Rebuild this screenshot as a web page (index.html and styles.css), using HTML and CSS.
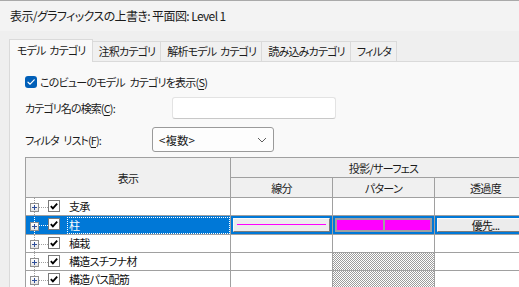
FILE: index.html
```html
<!DOCTYPE html>
<html lang="ja">
<head>
<meta charset="utf-8">
<title>表示/グラフィックスの上書き</title>
<link rel="stylesheet" href="styles.css">
</head>
<body>
<div class="titlebar">表示/グラフィックスの上書き: 平面図: Level 1</div>
<div class="dialog">
  <div class="tabs">
    <div class="tab active">モデル カテゴリ</div>
    <div class="tab">注釈カテゴリ</div>
    <div class="tab">解析モデル カテゴリ</div>
    <div class="tab">読み込みカテゴリ</div>
    <div class="tab">フィルタ</div>
  </div>
  <div class="panel">
    <div class="showcat">
      <span class="wincb"><svg width="12" height="12" viewBox="0 0 12 12"><path d="M3 6.2 L5.1 8.2 L9.2 3.8" fill="none" stroke="#fff" stroke-width="1.2" stroke-linecap="round" stroke-linejoin="round"/></svg></span>
      <span>このビューのモデル カテゴリを表示(<u>S</u>)</span>
    </div>
    <div class="field">
      <span class="flabel search-label">カテゴリ名の検索(<u>C</u>):</span>
      <div class="input"></div>
    </div>
    <div class="field field-filter">
      <span class="flabel filter-label">フィルタ リスト(<u>F</u>):</span>
      <div class="select"><span>&lt;複数&gt;</span><svg width="10" height="6" viewBox="0 0 10 6"><path d="M1 1 L5 5 L9 1" fill="none" stroke="#5f5f5f" stroke-width="1"/></svg></div>
    </div>
    <svg class="defs" width="0" height="0" aria-hidden="true"><defs><pattern id="checker" width="2" height="2" patternUnits="userSpaceOnUse"><rect width="2" height="2" fill="#fff"/><rect width="1" height="1" fill="#9c9c9c"/><rect x="1" y="1" width="1" height="1" fill="#9c9c9c"/></pattern></defs></svg>
    <table class="grid">
      <colgroup><col class="c-name"><col class="c-w"><col class="c-w"><col class="c-w"></colgroup>
      <thead>
        <tr><th rowspan="2" class="h-name">表示</th><th colspan="3" class="h-group">投影/サーフェス</th></tr>
        <tr><th class="h-sub">線分</th><th class="h-sub">パターン</th><th class="h-sub">透過度</th></tr>
      </thead>
      <tbody>
        <tr>
          <td class="name"><div class="namecell"><span class="plus"><svg width="9" height="9" viewBox="0 0 9 9"><path d="M2 4.5 H7 M4.5 2 V7" stroke="#2f4f9a" stroke-width="1"/></svg></span><span class="conn"></span><span class="gcb"><svg width="11" height="11" viewBox="0 0 11 11"><path d="M2 5 L4.3 7.6 L9 2.4" fill="none" stroke="#000" stroke-width="2"/></svg></span><span class="lbl">支承</span></div></td>
          <td></td><td></td><td></td>
        </tr>
        <tr class="sel">
          <td class="name"><div class="namecell"><span class="plus"><svg width="9" height="9" viewBox="0 0 9 9"><path d="M2 4.5 H7 M4.5 2 V7" stroke="#2f4f9a" stroke-width="1"/></svg></span><span class="conn"></span><span class="gcb"><svg width="11" height="11" viewBox="0 0 11 11"><path d="M2 5 L4.3 7.6 L9 2.4" fill="none" stroke="#000" stroke-width="2"/></svg></span><span class="lbl">柱</span></div></td>
          <td class="selcell"><div class="btn linebtn"><span class="mline"></span></div></td>
          <td class="selcell"><div class="patbtn"><span></span><span></span></div></td>
          <td class="selcell"><div class="btn">優先...</div></td>
        </tr>
        <tr>
          <td class="name"><div class="namecell"><span class="plus"><svg width="9" height="9" viewBox="0 0 9 9"><path d="M2 4.5 H7 M4.5 2 V7" stroke="#2f4f9a" stroke-width="1"/></svg></span><span class="conn"></span><span class="gcb"><svg width="11" height="11" viewBox="0 0 11 11"><path d="M2 5 L4.3 7.6 L9 2.4" fill="none" stroke="#000" stroke-width="2"/></svg></span><span class="lbl">植栽</span></div></td>
          <td></td><td></td><td></td>
        </tr>
        <tr>
          <td class="name"><div class="namecell"><span class="plus"><svg width="9" height="9" viewBox="0 0 9 9"><path d="M2 4.5 H7 M4.5 2 V7" stroke="#2f4f9a" stroke-width="1"/></svg></span><span class="conn"></span><span class="gcb"><svg width="11" height="11" viewBox="0 0 11 11"><path d="M2 5 L4.3 7.6 L9 2.4" fill="none" stroke="#000" stroke-width="2"/></svg></span><span class="lbl">構造スチフナ材</span></div></td>
          <td></td><td class="hatch"><svg class="hatchfill"><rect width="100%" height="100%" fill="url(#checker)"/></svg></td><td></td>
        </tr>
        <tr>
          <td class="name"><div class="namecell"><span class="plus"><svg width="9" height="9" viewBox="0 0 9 9"><path d="M2 4.5 H7 M4.5 2 V7" stroke="#2f4f9a" stroke-width="1"/></svg></span><span class="conn"></span><span class="gcb"><svg width="11" height="11" viewBox="0 0 11 11"><path d="M2 5 L4.3 7.6 L9 2.4" fill="none" stroke="#000" stroke-width="2"/></svg></span><span class="lbl">構造パス配筋</span></div></td>
          <td></td><td class="hatch"><svg class="hatchfill"><rect width="100%" height="100%" fill="url(#checker)"/></svg></td><td></td>
        </tr>
      </tbody>
    </table>
  </div>
</div>
</body>
</html>
```

FILE: styles.css
```css
* { box-sizing: border-box; }
html, body { margin: 0; padding: 0; }
body {
  width: 519px;
  height: 287px;
  overflow: hidden;
  background: #efefef;
  color: #1b1b1b;
  font-family: "Noto Sans CJK JP", "Noto Sans", sans-serif;
  font-size: 11px;
  letter-spacing: -0.7px;
  font-feature-settings: "palt";
}
u { text-decoration: underline; text-underline-offset: 2px; }

.titlebar {
  height: 31px;
  background: #f3f3f3;
  border-top: 1px solid #a9a9a9;
  padding-left: 10px;
  font-size: 12px;
  letter-spacing: -0.6px;
  line-height: 29px;
  white-space: nowrap;
}

.dialog { padding: 8px 0 0 9px; }

.tabs {
  display: flex;
  align-items: flex-end;
  height: 22px;
  white-space: nowrap;
}
.tab {
  height: 20px;
  padding: 0 5px 0 6px;
  margin-right: -1px;
  border: 1px solid #dadada;
  border-bottom: none;
  background: #f0f0f0;
  letter-spacing: -0.8px;
  word-spacing: 2px;
  line-height: 18px;
}
.tab.active {
  position: relative;
  z-index: 1;
  height: 23px;
  margin-bottom: -1px;
  padding: 0 6px 0 7px;
  background: #f9f9f9;
  line-height: 21px;
}

.panel {
  height: 240px;
  padding: 10px 0 0 15px;
  background: #f9f9f9;
  border: 1px solid #dadada;
  border-right: none;
}

.showcat {
  display: flex;
  align-items: center;
  gap: 3px;
  height: 20px;
  letter-spacing: -0.8px;
  word-spacing: 3px;
  white-space: nowrap;
}
.wincb {
  display: inline-flex;
  width: 12px;
  height: 12px;
  border-radius: 3px;
  background: #005fb8;
}

.field {
  display: flex;
  align-items: center;
  margin-top: 5px;
  height: 22px;
  white-space: nowrap;
}
.flabel { letter-spacing: -0.9px; word-spacing: 3px; }
.field-filter { margin-top: 8px; height: 25px; }
.search-label { width: 147px; }
.filter-label { width: 127px; }

.input {
  width: 164px;
  height: 22px;
  background: #fff;
  border: 1px solid #e3e3e3;
  border-bottom-color: #c8c8c8;
  border-radius: 3px;
}
.select {
  display: flex;
  align-items: center;
  justify-content: space-between;
  width: 122px;
  height: 25px;
  padding: 0 6px 0 6px;
  background: #fdfdfd;
  border: 1px solid #9a9a9a;
  border-radius: 3px;
  font-size: 11.5px;
  letter-spacing: 0;
}

.defs { position: absolute; }

.grid {
  margin-top: 5px;
  width: 511px;
  table-layout: fixed;
  border-collapse: collapse;
  border-top: 1px solid #707070;
  background: #fff;
}
.c-name { width: 205px; }
.c-w { width: 102px; }
.grid th, .grid td {
  padding: 0;
  border: 1px solid #a0a0a0;
  font-weight: normal;
  white-space: nowrap;
}
.grid th {
  background: #f0f0f0;
  text-align: center;
  color: #1b1b1b;
}
.h-group, .h-sub { height: 20px; line-height: 18px; }
.grid td { height: 18px; line-height: 16px; }

.namecell {
  display: flex;
  align-items: center;
  height: 17px;
  padding-left: 4px;
  background: repeating-linear-gradient(to bottom, #a0a0a0 0 1px, transparent 1px 2px) 8px 0 / 1px 100% no-repeat;
}
.plus {
  display: inline-flex;
  width: 9px;
  height: 9px;
  margin-top: 2px;
  border: 1px solid #8f8f8f;
  background: linear-gradient(#ffffff, #e4e4e4);
}
.plus svg { margin: -1px; }
.conn {
  width: 9px;
  height: 1px;
  margin-top: 1px;
  background: repeating-linear-gradient(to right, #a0a0a0 0 1px, transparent 1px 2px);
}
.gcb {
  display: inline-flex;
  width: 12px;
  height: 12px;
  margin-bottom: 2px;
  border: 1px solid #7a7a7a;
  background: #fff;
  overflow: hidden;
}
.lbl {
  flex: 1;
  height: 17px;
  margin-left: 7px;
  padding-left: 2px;
  line-height: 17px;
  color: #111;
}

.sel .name { background: #0078d7; }
.sel .namecell {
  background-image: repeating-linear-gradient(to bottom, #fff 0 1px, transparent 1px 2px);
}
.sel .conn { background: repeating-linear-gradient(to right, #fff 0 1px, transparent 1px 2px); }
.sel .lbl {
  color: #fff;
  outline: 1px dotted #fff;
  outline-offset: -1px;
}
.sel .selcell {
  padding: 2px;
  background: #0078d7;
}
.btn {
  height: 14px;
  background: #ececec;
  border: 1px solid;
  border-color: #fafafa #7a7a7a #7a7a7a #fafafa;
  text-align: center;
  line-height: 12px;
  color: #111;
}
.linebtn { padding: 5px 3px 0; }
.mline { display: block; border-top: 1px solid #ff00ff; }
.patbtn {
  display: flex;
  height: 14px;
  border: 2px solid #a0a0a0;
  gap: 2px;
  background: #a0a0a0;
}
.patbtn span { flex: 1; background: #ff00ff; }

.grid td.hatch { vertical-align: top; }
.hatchfill { display: block; width: 100%; height: 17px; }
```
